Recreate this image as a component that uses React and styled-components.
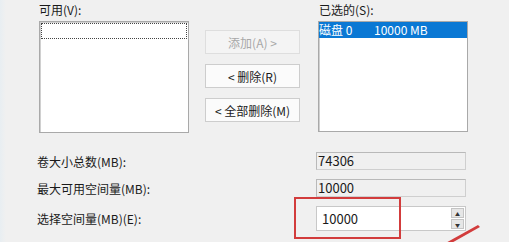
import React from "react"
import styled, { createGlobalStyle } from "styled-components"

const GlobalStyle = createGlobalStyle`
  html, body {
    margin: 0;
    padding: 0;
    background: #f0f0f0;
    overflow: hidden;
  }
  body {
    font-family: "Noto Sans CJK SC", "Noto Sans", "Liberation Sans", sans-serif;
    font-size: 12px;
    color: #1a1a1a;
  }
`

const Page = styled.div`
  position: relative;
  width: 509px;
  height: 242px;
  background: linear-gradient(to right, #e8eef2 0px, #f0f0f0 6px);
`

const TopArea = styled.div`
  display: flex;
  align-items: flex-start;
  padding: 2px 0 0 39px;
`

const Column = styled.div`
  display: flex;
  flex-direction: column;
  width: 150px;
`

const Label = styled.div`
  height: 19px;
  line-height: 16px;
  padding-left: ${p => p.$indent || 0}px;
  white-space: nowrap;
`

const ListBox = styled.div`
  box-sizing: border-box;
  height: ${p => p.$h}px;
  background: #fff;
  border: 1px solid #a9a9a9;
  box-shadow: inset 1px 1px 0 #d0d0d0;
  padding: 1px;
`

const FocusRow = styled.div`
  height: 14px;
  border: 1px dotted #444;
`

const SelectedRow = styled.div`
  display: flex;
  height: 16px;
  line-height: 16px;
  background: #0a78d4;
  color: #fff;
  white-space: nowrap;
  margin: -1px -1px 0 -1px;
`

const Cell = styled.span`
  width: ${p => p.$w}px;
`

const ButtonStack = styled.div`
  display: flex;
  flex-direction: column;
  gap: 10px;
  margin: 28px 18px 0 16px;
`

const Button = styled.div`
  box-sizing: border-box;
  width: 95px;
  height: 24px;
  display: flex;
  align-items: center;
  justify-content: center;
  background: ${p => (p.$disabled ? "#f4f4f4" : "#fbfbfb")};
  border: 1px solid ${p => (p.$disabled ? "#dedede" : "#cdcdcd")};
  color: ${p => (p.$disabled ? "#a8a8a8" : "#1a1a1a")};
  white-space: nowrap;
`

const BottomArea = styled.div`
  display: grid;
  grid-template-columns: 279px 150px;
  grid-template-rows: 18px 18px 25px;
  row-gap: 9px;
  align-items: center;
  padding: 13px 0 0 37px;
  margin-top: 6px;
`

const FieldLabel = styled.div`
  white-space: nowrap;
  margin-top: ${p => p.$shift || 0}px;
`

const ReadField = styled.div`
  box-sizing: border-box;
  height: 18px;
  line-height: 16px;
  background: #f0f0f0;
  border: 1px solid #cfcfcf;
  border-top-color: #b9b9b9;
  border-left-color: #b9b9b9;
  padding-left: 1px;
  font-size: 13px;
`

const SpinBox = styled.div`
  box-sizing: border-box;
  height: 25px;
  display: flex;
  align-items: stretch;
  background: #fff;
  border: 1px solid #c8c8c8;
`

const SpinValue = styled.div`
  flex: 1;
  display: flex;
  align-items: center;
  padding-left: 5px;
  font-size: 13px;
`

const SpinButtons = styled.div`
  display: flex;
  flex-direction: column;
  width: 13px;
  margin: 1px 1px 1px 0;
  gap: 1px;
`

const SpinArrow = styled.div`
  flex: 1;
  display: flex;
  align-items: center;
  justify-content: center;
  background: #e6e6e6;
  border: 1px solid #c4c4c4;
  font-size: 5px;
  color: #333;
  line-height: 1;
`

const Highlight = styled.div`
  position: absolute;
  left: 294px;
  top: 197px;
  width: 107px;
  height: 42px;
  box-sizing: border-box;
  border: 2px solid #d23c3c;
  pointer-events: none;
`

const Arrow = styled.svg`
  position: absolute;
  left: 430px;
  top: 215px;
  pointer-events: none;
`

export default function App() {
  return (
    <Page>
      <GlobalStyle />
      <TopArea>
        <Column>
          <Label>可用(V):</Label>
          <ListBox $h={112}>
            <FocusRow />
          </ListBox>
        </Column>
        <ButtonStack>
          <Button $disabled>添加(A) &gt;</Button>
          <Button>&lt; 删除(R)</Button>
          <Button>&lt; 全部删除(M)</Button>
        </ButtonStack>
        <Column>
          <Label $indent={1}>已选的(S):</Label>
          <ListBox $h={111}>
            <SelectedRow>
              <Cell $w={55}>磁盘 0</Cell>
              <Cell $w={80}>10000 MB</Cell>
            </SelectedRow>
          </ListBox>
        </Column>
      </TopArea>
      <BottomArea>
        <FieldLabel>卷大小总数(MB):</FieldLabel>
        <ReadField>74306</ReadField>
        <FieldLabel>最大可用空间量(MB):</FieldLabel>
        <ReadField>10000</ReadField>
        <FieldLabel>选择空间量(MB)(E):</FieldLabel>
        <SpinBox>
          <SpinValue>10000</SpinValue>
          <SpinButtons>
            <SpinArrow>▲</SpinArrow>
            <SpinArrow>▼</SpinArrow>
          </SpinButtons>
        </SpinBox>
      </BottomArea>
      <Highlight />
      <Arrow width="60" height="30" viewBox="0 0 60 30">
        <polygon points="50,12 48,10 12,30 18,30" fill="#d23c3c" />
      </Arrow>
    </Page>
  )
}
